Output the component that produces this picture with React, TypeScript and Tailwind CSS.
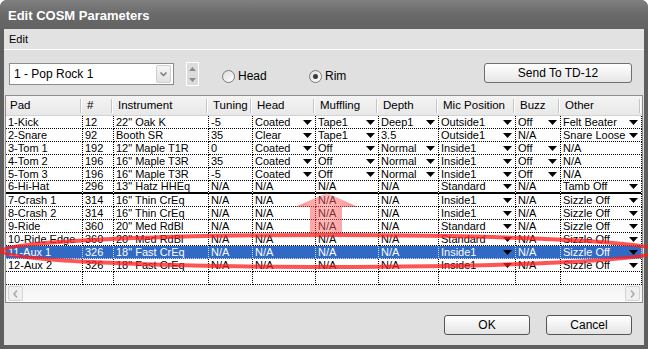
import React from "react";

const cols = [
  { w: "w-[77px]", label: "Pad" },
  { w: "w-[31px]", label: "#" },
  { w: "w-[95px]", label: "Instrument" },
  { w: "w-[44px]", label: "Tuning" },
  { w: "w-[63px]", label: "Head" },
  { w: "w-[63px]", label: "Muffling" },
  { w: "w-[60px]", label: "Depth" },
  { w: "w-[77px]", label: "Mic Position" },
  { w: "w-[45px]", label: "Buzz" },
  { w: "w-[81px]", label: "Other" },
];

// cells, then the columns that show a drop arrow
const rows: { cells: string[]; arrows: number[] }[] = [
  { cells: ["1-Kick", "12", "22\" Oak K", "-5", "Coated", "Tape1", "Deep1", "Outside1", "Off", "Felt Beater"], arrows: [4, 5, 6, 7, 8, 9] },
  { cells: ["2-Snare", "92", "Booth SR", "35", "Clear", "Tape1", "3.5", "Outside1", "N/A", "Snare Loose"], arrows: [4, 5, 7, 9] },
  { cells: ["3-Tom 1", "192", "12\" Maple T1R", "0", "Coated", "Off", "Normal", "Inside1", "Off", "N/A"], arrows: [4, 5, 6, 7, 8] },
  { cells: ["4-Tom 2", "196", "16\" Maple T3R", "35", "Coated", "Off", "Normal", "Inside1", "Off", "N/A"], arrows: [4, 5, 6, 7, 8] },
  { cells: ["5-Tom 3", "196", "16\" Maple T3R", "-5", "Coated", "Off", "Normal", "Inside1", "Off", "N/A"], arrows: [4, 5, 6, 7, 8] },
  { cells: ["6-Hi-Hat", "296", "13\" Hatz HHEq", "N/A", "N/A", "N/A", "N/A", "Standard", "N/A", "Tamb Off"], arrows: [7, 9] },
  { cells: ["7-Crash 1", "314", "16\" Thin CrEq", "N/A", "N/A", "N/A", "N/A", "Inside1", "N/A", "Sizzle Off"], arrows: [7, 9] },
  { cells: ["8-Crash 2", "314", "16\" Thin CrEq", "N/A", "N/A", "N/A", "N/A", "Inside1", "N/A", "Sizzle Off"], arrows: [7, 9] },
  { cells: ["9-Ride", "360", "20\" Med RdBl", "N/A", "N/A", "N/A", "N/A", "Standard", "N/A", "Sizzle Off"], arrows: [7, 9] },
  { cells: ["10-Ride Edge", "360", "20\" Med RdBl", "N/A", "N/A", "N/A", "N/A", "Standard", "N/A", "Sizzle Off"], arrows: [7, 9] },
  { cells: ["11-Aux 1", "326", "18\" Fast CrEq", "N/A", "N/A", "N/A", "N/A", "Inside1", "N/A", "Sizzle Off"], arrows: [7, 9] },
  { cells: ["12-Aux 2", "326", "18\" Fast CrEq", "N/A", "N/A", "N/A", "N/A", "Inside1", "N/A", "Sizzle Off"], arrows: [7, 9] },
  { cells: ["", "", "", "", "", "", "", "", "", ""], arrows: [] },
];

function DropArrow() {
  return (
    <svg width="9" height="5" viewBox="0 0 9 5" className="mr-[3px] mb-[3px] shrink-0">
      <polygon points="0,0 9,0 4.5,5" fill="#000" />
    </svg>
  );
}

function Radio({ checked, label }: { checked?: boolean; label: string }) {
  return (
    <div className="flex items-center gap-[3px]">
      <div className="w-[13px] h-[13px] rounded-full border border-[#7a7a7a] bg-linear-to-br from-[#dcdcdc] to-[#ffffff] flex items-center justify-center">
        {checked && <div className="w-[5px] h-[5px] rounded-full bg-[#3a3a3a]" />}
      </div>
      <span>{label}</span>
    </div>
  );
}

export default function App() {
  return (
    <div className="w-[648px] h-[349px] bg-white relative overflow-hidden font-['Liberation_Sans',Arial,sans-serif] text-[11px] text-black">
      <div className="w-full h-full rounded-t-[7px] bg-[#5f5f5f] flex flex-col">
        {/* title bar */}
        <div className="h-[29px] shrink-0 rounded-t-[7px] bg-linear-to-b from-[#808080] via-[#6a6a6a] to-[#626262] flex items-center pl-[8px] pt-[2px] text-white font-bold text-[13px]">
          Edit COSM Parameters
        </div>

        <div className="mx-[4px] h-[316px] bg-[#e0e0e0] flex flex-col">
          {/* menu */}
          <div className="h-[21px] shrink-0 flex items-center pl-[5px] border-b border-white bg-[#e2e2e2]">Edit</div>

          {/* toolbar */}
          <div className="h-[45px] shrink-0 flex items-start pt-[13px] pl-[5px] pr-[12px]">
            <div className="w-[165px] h-[22px] bg-white border border-[#8c8c8c] flex items-center justify-between pl-[4px] pr-[2px]">
              <span className="text-[12px]">1 - Pop Rock 1</span>
              <div className="w-[15px] h-[18px] rounded-[2px] border border-[#d0d0d0] bg-linear-to-b from-[#f6f6f6] to-[#e2e2e2] flex items-center justify-center">
                <svg width="7" height="5" viewBox="0 0 7 5">
                  <polyline points="0.5,0.5 3.5,3.5 6.5,0.5" fill="none" stroke="#7a7a7a" strokeWidth="1.5" />
                </svg>
              </div>
            </div>
            <div className="ml-[12px] -mt-px w-[13px] h-[24px] border border-white bg-[#dcdcdc] flex flex-col items-center justify-around">
              <svg width="7" height="4" viewBox="0 0 7 4">
                <polygon points="0,4 7,4 3.5,0" fill="#8a8a8a" />
              </svg>
              <svg width="7" height="4" viewBox="0 0 7 4">
                <polygon points="0,0 7,0 3.5,4" fill="#8a8a8a" />
              </svg>
            </div>
            <div className="ml-[23px] mt-[4px] w-[87px] text-[12px]">
              <Radio label="Head" />
            </div>
            <div className="mt-[4px] text-[12px]">
              <Radio checked label="Rim" />
            </div>
            <button className="ml-auto w-[148px] h-[20px] rounded-[3px] border border-[#6f6f6f] bg-linear-to-b from-[#ffffff] to-[#e6e6e6] text-[12px]">
              Send To TD-12
            </button>
          </div>

          {/* table */}
          <div className="ml-[1px] w-[638px] h-[208px] shrink-0 border border-[#8e8e8e] bg-white flex flex-col">
            <div className="h-[20px] shrink-0 flex bg-linear-to-b from-[#f4f4f4] to-[#e8e8e8] border-b border-[#d2d2d2]">
              {cols.map((c) => (
                <div key={c.label} className={`${c.w} h-full flex items-center justify-between pl-[4px]`}>
                  <span className="text-[11.5px] pt-[1px] whitespace-nowrap">{c.label}</span>
                  <span className="w-[2px] h-[14px] mr-[1px] shrink-0 border-l border-[#c4c4c4] border-r border-r-white" />
                </div>
              ))}
            </div>
            {rows.map((r, i) => {
              const sel = i === 10;
              const drag = i === 5;
              return (
                <div key={i} className={`h-[13px] shrink-0 flex ${sel ? "bg-[#316ac5] text-white" : ""}`}>
                  {r.cells.map((t, j) => (
                    <div
                      key={j}
                      className={`${cols[j].w} h-[13px] flex items-end justify-between pl-[2px] border-r border-b border-dotted ${sel ? "border-[#c8d6f0]" : "border-black"} ${drag ? "[border-bottom-style:solid] border-b-2 border-b-black" : ""}`}
                    >
                      <span className="leading-[12px] whitespace-nowrap">{t}</span>
                      {r.arrows.includes(j) && <DropArrow />}
                    </div>
                  ))}
                </div>
              );
            })}
            {/* horizontal scroll bar */}
            <div className="h-[17px] shrink-0 flex items-center justify-between px-[2px] bg-linear-to-b from-[#f2f2f2] to-[#fcfcfc]">
              <div className="w-[15px] h-[15px] rounded-[2px] border border-[#d4d4d4] bg-[#f0f0f0] flex items-center justify-center">
                <svg width="5" height="8" viewBox="0 0 5 8">
                  <polyline points="4,0.5 1,4 4,7.5" fill="none" stroke="#a8a8a8" strokeWidth="1.5" />
                </svg>
              </div>
              <div className="w-[15px] h-[15px] rounded-[2px] border border-[#d4d4d4] bg-[#f0f0f0] flex items-center justify-center">
                <svg width="5" height="8" viewBox="0 0 5 8">
                  <polyline points="1,0.5 4,4 1,7.5" fill="none" stroke="#a8a8a8" strokeWidth="1.5" />
                </svg>
              </div>
            </div>
          </div>

          {/* footer */}
          <div className="flex-1 flex items-start justify-end gap-[16px] pt-[12px] pr-[12px]">
            <button className="w-[86px] h-[20px] rounded-[3px] border border-[#555555] bg-linear-to-b from-[#ffffff] to-[#e4e4e4] text-[12px]">OK</button>
            <button className="w-[86px] h-[20px] rounded-[3px] border border-[#555555] bg-linear-to-b from-[#ffffff] to-[#e4e4e4] text-[12px]">Cancel</button>
          </div>
        </div>
      </div>

      {/* red annotation overlay */}
      <svg className="absolute inset-0 pointer-events-none" width="648" height="349" viewBox="0 0 648 349">
        <defs>
          <linearGradient id="shaft" x1="0" x2="1" y1="0" y2="0">
            <stop offset="0" stopColor="#ff3a3a" stopOpacity="0.6" />
            <stop offset="0.5" stopColor="#ff6a6a" stopOpacity="0.45" />
            <stop offset="1" stopColor="#ff3a3a" stopOpacity="0.6" />
          </linearGradient>
          <filter id="soft" x="-5%" y="-50%" width="110%" height="200%">
            <feGaussianBlur stdDeviation="0.7" />
          </filter>
        </defs>
        <polygon points="327,193 358,207 342,207 342,234 310,234 310,207 295,207" fill="url(#shaft)" />
        <ellipse cx="330" cy="251" rx="329" ry="16" fill="none" stroke="#ff1e1e" strokeOpacity="0.75" strokeWidth="4" filter="url(#soft)" />
      </svg>
    </div>
  );
}
